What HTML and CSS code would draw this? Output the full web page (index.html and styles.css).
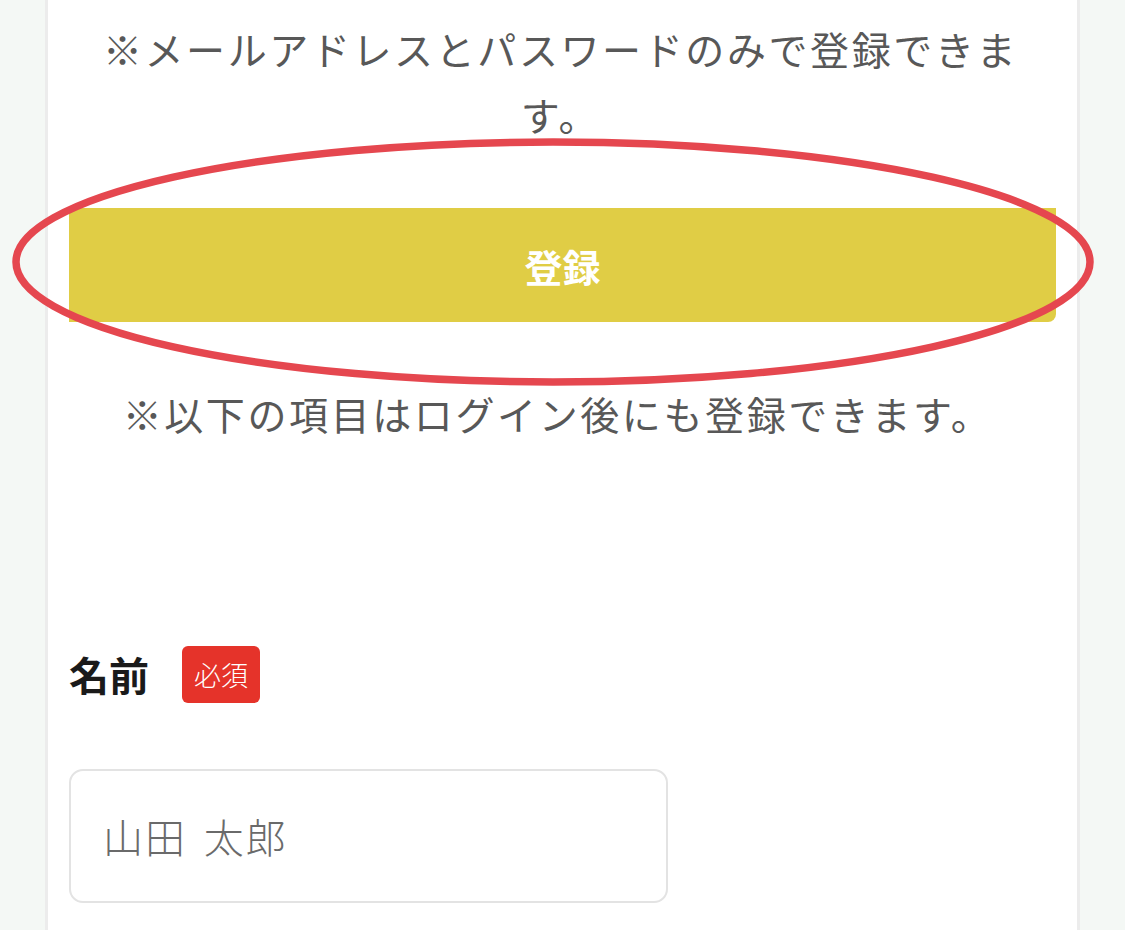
FILE: index.html
```html
<!DOCTYPE html>
<html lang="ja">
<head>
<meta charset="utf-8">
<link rel="stylesheet" href="styles.css">
</head>
<body>
<div class="page">
  <main class="card">
    <p class="note note-top">※メールアドレスとパスワードのみで登録できます。</p>
    <div class="btn-wrap">
      <button class="btn" type="button">登録</button>
      <svg class="mark" viewBox="0 0 1110 270" width="1110" height="270" aria-hidden="true">
        <ellipse cx="553" cy="132" rx="537" ry="120" fill="none" stroke="#e5474f" stroke-width="7.5"/>
      </svg>
    </div>
    <p class="note note-bottom">※以下の項目はログイン後にも登録できます。</p>
    <div class="field">
      <div class="label-row">
        <span class="label">名前</span>
        <span class="badge">必須</span>
      </div>
      <div class="input">山田 太郎</div>
    </div>
  </main>
</div>
</body>
</html>
```
FILE: styles.css
```css
html, body {
  margin: 0;
  padding: 0;
}
body {
  background: #f4f8f5;
  font-family: "Noto Sans CJK JP", "Noto Sans", sans-serif;
  overflow: hidden;
}
.page {
  height: 930px;
  padding-left: 45px;
}
.card {
  box-sizing: border-box;
  width: 1035px;
  height: 930px;
  background: #fff;
  border-left: 3px solid #ececec;
  border-right: 3px solid #ececec;
  padding: 15px 21px 0;
}
.note {
  margin: 0 auto;
  color: #585858;
  font-size: 39px;
  line-height: 66px;
  letter-spacing: 2.6px;
  text-align: center;
}
.note-top {
  width: 930px;
  padding-right: 4px;
}
.btn-wrap {
  position: relative;
  margin-top: 61px;
}
.btn {
  display: block;
  width: 100%;
  height: 114px;
  border: 0;
  border-radius: 0 0 8px 0;
  background: #e0cd45;
  color: #fff;
  font-family: inherit;
  font-weight: 700;
  font-size: 38px;
  padding: 0;
}
.mark {
  position: absolute;
  left: -69px;
  top: -78px;
  pointer-events: none;
}
.note-bottom {
  margin-top: 58px;
  padding-right: 10px;
}
.field {
  margin-top: 199px;
}
.label-row {
  display: flex;
  align-items: center;
  gap: 33px;
  height: 58px;
}
.label {
  font-size: 40px;
  font-weight: 700;
  color: #1a1a1a;
}
.badge {
  display: flex;
  align-items: center;
  justify-content: center;
  width: 78px;
  height: 57px;
  border-radius: 6px;
  background: #e5332a;
  color: #fff;
  font-size: 27px;
  font-weight: 300;
}
.input {
  box-sizing: border-box;
  margin-top: 66px;
  width: 599px;
  height: 134px;
  border: 2px solid #e3e3e3;
  border-radius: 14px;
  padding-left: 32px;
  display: flex;
  align-items: center;
  color: #6a6a6a;
  font-size: 40px;
  font-weight: 300;
  letter-spacing: 2px;
  word-spacing: 6px;
}
```
